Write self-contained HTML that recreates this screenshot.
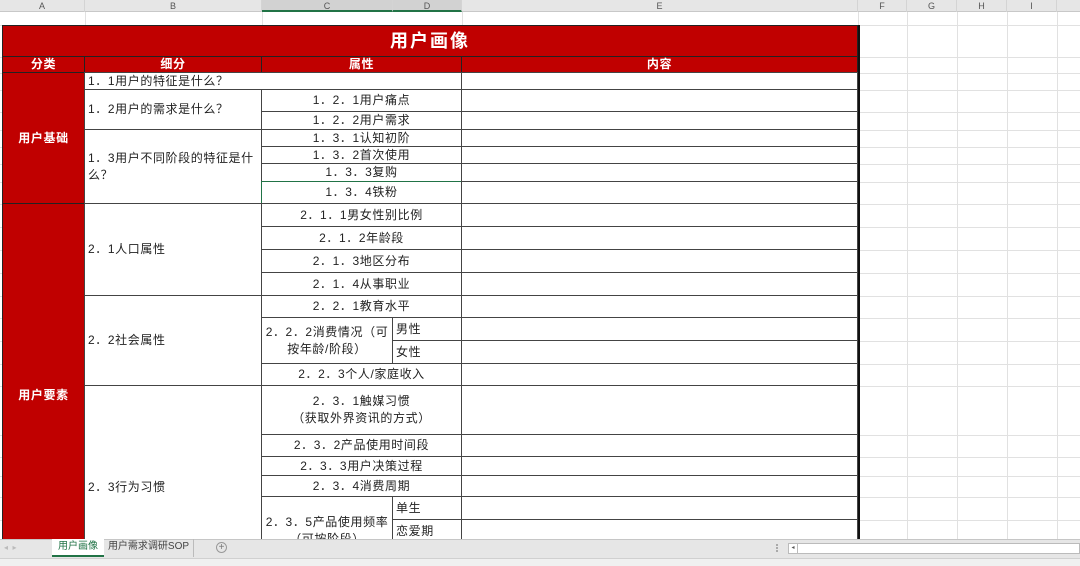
<!DOCTYPE html>
<html><head><meta charset="utf-8"><style>
*{margin:0;padding:0;box-sizing:border-box}
body{width:1080px;height:566px;overflow:hidden;background:#fff;position:relative;font-family:"Liberation Sans","Noto Sans CJK SC",sans-serif;font-size:12px;color:#222}
.a{position:absolute}
.h{position:absolute;left:0;width:1080px;height:1px;background:#e1e1e1}
.v{position:absolute;top:12px;width:1px;height:527px;background:#e1e1e1}
.c{position:absolute;display:flex;align-items:center;justify-content:center;text-align:center;border:1px solid #444;margin:-1px 0 0 -1px;background:#fff;letter-spacing:0.6px;line-height:17px}
.l{justify-content:flex-start;text-align:left;padding-left:3px}
.r{background:#c00000;color:#fff;font-weight:bold;border-color:#222}
.colh{position:absolute;top:0;height:12px;font-size:9px;color:#555;text-align:center;line-height:12px;border-right:1px solid #d4d4d4}
</style></head><body>
<div class="a" style="left:0;top:0;width:1080px;height:12px;background:#e6e6e6;border-bottom:1px solid #c8c8c8"></div>
<div class="colh" style="left:0;width:85px">A</div>
<div class="colh" style="left:85px;width:177px">B</div>
<div class="colh" style="left:262px;width:131px;background:#d2d2d2;border-bottom:2px solid #217346">C</div>
<div class="colh" style="left:393px;width:69px;background:#d2d2d2;border-bottom:2px solid #217346">D</div>
<div class="colh" style="left:462px;width:396px">E</div>
<div class="colh" style="left:858px;width:49px">F</div>
<div class="colh" style="left:907px;width:50px">G</div>
<div class="colh" style="left:957px;width:50px">H</div>
<div class="colh" style="left:1007px;width:50px">I</div>
<div class="h" style="top:25px"></div><div class="h" style="top:57px"></div><div class="h" style="top:73px"></div><div class="h" style="top:90px"></div><div class="h" style="top:112px"></div><div class="h" style="top:130px"></div><div class="h" style="top:147px"></div><div class="h" style="top:164px"></div><div class="h" style="top:182px"></div><div class="h" style="top:204px"></div><div class="h" style="top:227px"></div><div class="h" style="top:250px"></div><div class="h" style="top:273px"></div><div class="h" style="top:296px"></div><div class="h" style="top:318px"></div><div class="h" style="top:341px"></div><div class="h" style="top:364px"></div><div class="h" style="top:386px"></div><div class="h" style="top:435px"></div><div class="h" style="top:457px"></div><div class="h" style="top:476px"></div><div class="h" style="top:497px"></div><div class="h" style="top:520px"></div>
<div class="v" style="left:85px"></div><div class="v" style="left:262px"></div><div class="v" style="left:462px"></div><div class="v" style="left:858px"></div><div class="v" style="left:907px"></div><div class="v" style="left:957px"></div><div class="v" style="left:1007px"></div><div class="v" style="left:1057px"></div>
<div class="c r" style="left:3px;top:26px;width:856px;height:32px;font-size:18px;letter-spacing:2px">用户画像</div>
<div class="c r" style="left:3px;top:57px;width:83px;height:17px">分类</div>
<div class="c r" style="left:85px;top:57px;width:178px;height:17px">细分</div>
<div class="c r" style="left:262px;top:57px;width:201px;height:17px">属性</div>
<div class="c r" style="left:462px;top:57px;width:397px;height:17px">内容</div>
<div class="c r" style="left:3px;top:73px;width:83px;height:132px">用户基础</div>
<div class="c r" style="left:3px;top:204px;width:83px;height:336px;border-bottom:none;align-items:flex-start;padding-top:183px">用户要素</div>
<div class="c l" style="left:85px;top:73px;width:378px;height:18px">1．1用户的特征是什么？</div>
<div class="c l" style="left:85px;top:90px;width:178px;height:41px">1．2用户的需求是什么？</div>
<div class="c" style="left:262px;top:90px;width:201px;height:23px">1．2．1用户痛点</div>
<div class="c" style="left:262px;top:112px;width:201px;height:19px">1．2．2用户需求</div>
<div class="c l" style="left:85px;top:130px;width:178px;height:75px">1．3用户不同阶段的特征是什么？</div>
<div class="c" style="left:262px;top:130px;width:201px;height:18px">1．3．1认知初阶</div>
<div class="c" style="left:262px;top:147px;width:201px;height:18px">1．3．2首次使用</div>
<div class="c" style="left:262px;top:164px;width:201px;height:19px">1．3．3复购</div>
<div class="c" style="left:262px;top:182px;width:201px;height:23px;border:1px solid #217346">1．3．4铁粉</div>
<div class="c l" style="left:85px;top:204px;width:178px;height:93px">2．1人口属性</div>
<div class="c" style="left:262px;top:204px;width:201px;height:24px">2．1．1男女性别比例</div>
<div class="c" style="left:262px;top:227px;width:201px;height:24px">2．1．2年龄段</div>
<div class="c" style="left:262px;top:250px;width:201px;height:24px">2．1．3地区分布</div>
<div class="c" style="left:262px;top:273px;width:201px;height:24px">2．1．4从事职业</div>
<div class="c l" style="left:85px;top:296px;width:178px;height:91px">2．2社会属性</div>
<div class="c" style="left:262px;top:296px;width:201px;height:23px">2．2．1教育水平</div>
<div class="c" style="left:262px;top:318px;width:132px;height:47px">2．2．2消费情况（可<br>按年龄/阶段）</div>
<div class="c l" style="left:393px;top:318px;width:70px;height:24px">男性</div>
<div class="c l" style="left:393px;top:341px;width:70px;height:24px">女性</div>
<div class="c" style="left:262px;top:364px;width:201px;height:23px">2．2．3个人/家庭收入</div>
<div class="c l" style="left:85px;top:386px;width:178px;height:154px;border-bottom:none;align-items:flex-start;padding-top:93px">2．3行为习惯</div>
<div class="c" style="left:262px;top:386px;width:201px;height:50px">2．3．1触媒习惯<br>（获取外界资讯的方式）</div>
<div class="c" style="left:262px;top:435px;width:201px;height:23px">2．3．2产品使用时间段</div>
<div class="c" style="left:262px;top:457px;width:201px;height:20px">2．3．3用户决策过程</div>
<div class="c" style="left:262px;top:476px;width:201px;height:22px">2．3．4消费周期</div>
<div class="c" style="left:262px;top:497px;width:132px;height:60px;align-items:flex-start;padding-top:17px">2．3．5产品使用频率<br>（可按阶段）</div>
<div class="c l" style="left:393px;top:497px;width:70px;height:24px">单生</div>
<div class="c l" style="left:393px;top:520px;width:70px;height:24px">恋爱期</div>
<div class="c" style="left:462px;top:73px;width:397px;height:18px"></div>
<div class="c" style="left:462px;top:90px;width:397px;height:23px"></div>
<div class="c" style="left:462px;top:112px;width:397px;height:19px"></div>
<div class="c" style="left:462px;top:130px;width:397px;height:18px"></div>
<div class="c" style="left:462px;top:147px;width:397px;height:18px"></div>
<div class="c" style="left:462px;top:164px;width:397px;height:19px"></div>
<div class="c" style="left:462px;top:182px;width:397px;height:23px"></div>
<div class="c" style="left:462px;top:204px;width:397px;height:24px"></div>
<div class="c" style="left:462px;top:227px;width:397px;height:24px"></div>
<div class="c" style="left:462px;top:250px;width:397px;height:24px"></div>
<div class="c" style="left:462px;top:273px;width:397px;height:24px"></div>
<div class="c" style="left:462px;top:296px;width:397px;height:23px"></div>
<div class="c" style="left:462px;top:318px;width:397px;height:24px"></div>
<div class="c" style="left:462px;top:341px;width:397px;height:24px"></div>
<div class="c" style="left:462px;top:364px;width:397px;height:23px"></div>
<div class="c" style="left:462px;top:386px;width:397px;height:50px"></div>
<div class="c" style="left:462px;top:435px;width:397px;height:23px"></div>
<div class="c" style="left:462px;top:457px;width:397px;height:20px"></div>
<div class="c" style="left:462px;top:476px;width:397px;height:22px"></div>
<div class="c" style="left:462px;top:497px;width:397px;height:24px"></div>
<div class="c" style="left:462px;top:520px;width:397px;height:24px"></div>
<div class="a" style="left:858px;top:25px;width:2px;height:515px;background:#111"></div>
<div class="a" style="left:0;top:539px;width:1080px;height:20px;background:#e6e6e6;border-top:1px solid #c6c6c6"></div>
<div class="a" style="left:0;top:558px;width:1080px;height:8px;background:#f0f0f0;border-top:1px solid #d0d0d0"></div>
<div class="a" style="left:4px;top:543px;font-size:8px;color:#bbb">◂ &nbsp;▸</div>
<div class="a" style="left:52px;top:539px;width:52px;height:18px;background:#fff;border-bottom:2px solid #217346;color:#217346;font-size:10px;text-align:center;line-height:16px">用户画像</div>
<div class="a" style="left:104px;top:539px;width:90px;height:18px;color:#444;font-size:10px;text-align:center;line-height:16px;border-right:1px solid #bbb">用户需求调研SOP</div>
<div class="a" style="left:216px;top:542px;width:11px;height:11px;border:1px solid #999;border-radius:50%;font-size:10px;line-height:9px;text-align:center;color:#777">+</div>
<div class="a" style="left:776px;top:544px;width:2px;height:8px;border-left:2px dotted #aaa"></div>
<div class="a" style="left:788px;top:543px;width:292px;height:11px;background:#fff;border:1px solid #bbb"></div>
<div class="a" style="left:789px;top:544px;width:9px;height:9px;border-right:1px solid #bbb;font-size:6px;line-height:9px;text-align:center;color:#555">◂</div>
</body></html>
